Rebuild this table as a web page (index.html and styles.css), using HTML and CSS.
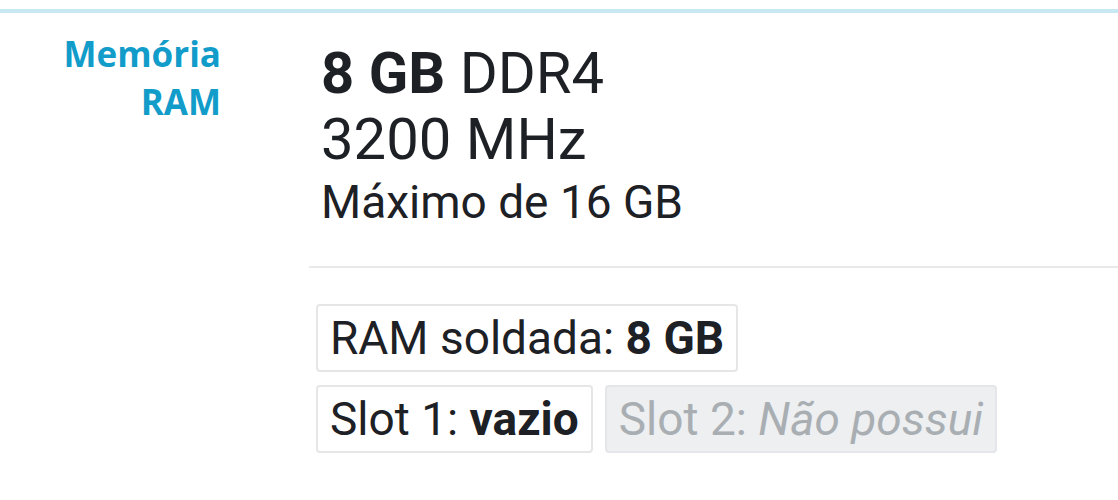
FILE: index.html
```html
<!DOCTYPE html>
<html lang="pt-BR">
<head>
<meta charset="utf-8">
<link rel="stylesheet" href="styles.css">
</head>
<body>
<section class="spec">
  <div class="spec-row">
    <div class="spec-label">Memória<br>RAM</div>
    <div class="spec-content">
      <div class="spec-main">
        <div class="line-big"><b>8 GB</b> DDR4</div>
        <div class="line-big">3200 MHz</div>
        <div class="line-mid">Máximo de 16 GB</div>
      </div>
      <div class="chips">
        <div class="chip-row">
          <span class="chip">RAM soldada: <b>8 GB</b></span>
        </div>
        <div class="chip-row">
          <span class="chip">Slot 1: <b>vazio</b></span>
          <span class="chip chip-off">Slot 2: <i>Não possui</i></span>
        </div>
      </div>
    </div>
  </div>
</section>
</body>
</html>
```
FILE: styles.css
```css
html, body {
  margin: 0;
  padding: 0;
  background: #ffffff;
}

body {
  font-family: Roboto, "Liberation Sans", sans-serif;
  color: #1d2024;
}

.spec {
  margin-top: 9px;
  border-top: 4px solid #c8e8f3;
}

.spec-row {
  display: flex;
  gap: 88px;
}

.spec-label {
  width: 221px;
  flex: none;
  text-align: right;
  padding-top: 17px;
  font-family: "Open Sans", Roboto, sans-serif;
  font-size: 35px;
  line-height: 48px;
  font-weight: 700;
  color: #129cca;
}

.spec-content {
  flex: 1;
  padding-top: 27px;
}

.spec-main {
  padding-left: 12px;
  padding-bottom: 34px;
  border-bottom: 2px solid #e9e9e9;
}

.line-big {
  font-size: 58px;
  line-height: 66px;
}

.line-mid {
  font-size: 46px;
  line-height: 60px;
}

.chips {
  margin-top: 36px;
  padding-left: 7px;
  display: flex;
  flex-direction: column;
  gap: 13px;
}

.chip-row {
  display: flex;
  gap: 12px;
}

.chip {
  display: inline-block;
  font-size: 46px;
  line-height: 54px;
  padding: 5px 12px;
  border: 2px solid #e6e6e6;
  border-radius: 4px;
  background: #ffffff;
}

.chip-off {
  background: #edeff1;
  border-color: #e4e6e9;
  color: #a9aeb3;
}
```
